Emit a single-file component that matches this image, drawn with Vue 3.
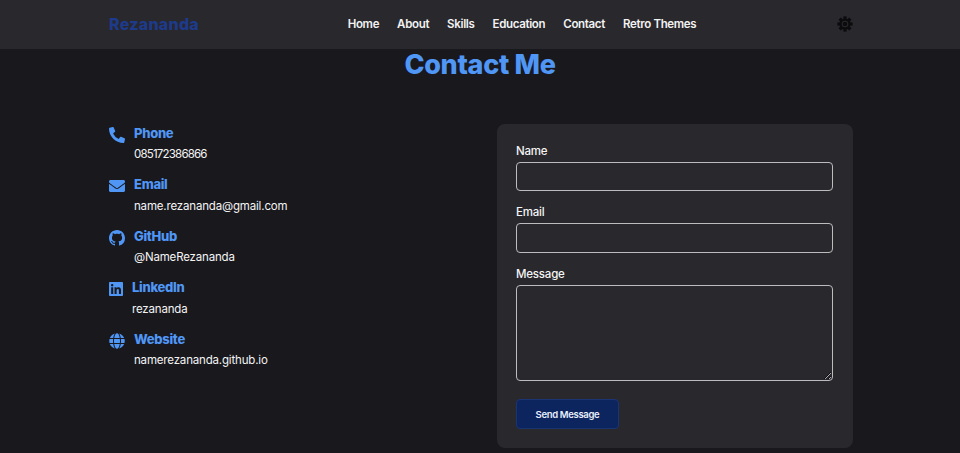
<script setup>
const nav = ['Home', 'About', 'Skills', 'Education', 'Contact', 'Retro Themes']
const teeth = [0, 45, 90, 135, 180, 225, 270, 315]
const contacts = [
  { title: 'Phone', value: '085172386866', digits: true, box: '0 0 512 512', w: 16, d: 'M497.39 361.8l-112-48a24 24 0 0 0-28 6.9l-49.6 60.6A370.66 370.66 0 0 1 130.6 204.11l60.6-49.6a23.94 23.94 0 0 0 6.9-28l-48-112A24.16 24.16 0 0 0 122.6.61l-104 24A24 24 0 0 0 0 48c0 256.5 207.9 464 464 464a24 24 0 0 0 23.4-18.6l24-104a24.29 24.29 0 0 0-14.01-27.6z' },
  { title: 'Email', value: 'name.rezananda@gmail.com', box: '0 0 512 512', w: 16, d: 'M502.3 190.8c3.9-3.1 9.7-.2 9.7 4.7V400c0 26.5-21.5 48-48 48H48c-26.5 0-48-21.5-48-48V195.6c0-5 5.7-7.8 9.7-4.7 22.4 17.4 52.1 39.5 154.1 113.6 21.1 15.4 56.7 47.8 92.2 47.6 35.7.3 72-32.8 92.3-47.6 102-74.1 131.6-96.3 154-113.7zM256 320c23.2.4 56.6-29.2 73.4-41.4 132.7-96.3 142.8-104.7 173.4-128.7 5.8-4.5 9.2-11.5 9.2-18.9v-19c0-26.5-21.5-48-48-48H48C21.5 64 0 85.5 0 112v19c0 7.4 3.4 14.3 9.2 18.9 30.6 23.9 40.7 32.4 173.4 128.7 16.8 12.2 50.2 41.8 73.4 41.4z' },
  { title: 'GitHub', value: '@NameRezananda', box: '0 0 16 16', w: 16, d: 'M8 0C3.58 0 0 3.58 0 8c0 3.54 2.29 6.53 5.47 7.59.4.07.55-.17.55-.38 0-.19-.01-.82-.01-1.49-2.01.37-2.53-.49-2.69-.94-.09-.23-.48-.94-.82-1.13-.28-.15-.68-.52-.01-.53.63-.01 1.08.58 1.23.82.72 1.21 1.87.87 2.33.66.07-.52.28-.87.51-1.07-1.78-.2-3.64-.89-3.64-3.95 0-.87.31-1.59.82-2.15-.08-.2-.36-1.02.08-2.12 0 0 .67-.21 2.2.82.64-.18 1.32-.27 2-.27.68 0 1.36.09 2 .27 1.53-1.04 2.2-.82 2.2-.82.44 1.1.16 1.92.08 2.12.51.56.82 1.27.82 2.15 0 3.07-1.87 3.75-3.65 3.95.29.25.54.73.54 1.48 0 1.07-.01 1.93-.01 2.2 0 .21.15.46.55.38A8.013 8.013 0 0016 8c0-4.42-3.58-8-8-8z' },
  { title: 'LinkedIn', value: 'rezananda', box: '0 0 448 512', w: 14, d: 'M416 32H31.9C14.3 32 0 46.5 0 64.3v383.4C0 465.5 14.3 480 31.9 480H416c17.6 0 32-14.5 32-32.3V64.3c0-17.8-14.4-32.3-32-32.3zM135.4 416H69V202.2h66.5V416zm-33.2-243c-21.3 0-38.5-17.3-38.5-38.5S80.9 96 102.2 96c21.2 0 38.5 17.3 38.5 38.5 0 21.3-17.2 38.5-38.5 38.5zm282.1 243h-66.4V312c0-24.8-.5-56.7-34.5-56.7-34.6 0-39.9 27-39.9 54.9V416h-66.4V202.2h63.7v29.2h.9c8.9-16.8 30.6-34.5 62.9-34.5 67.2 0 79.7 44.3 79.7 101.9V416z' },
  { title: 'Website', value: 'namerezananda.github.io', box: '0 0 496 512', w: 16, d: 'M336.5 160C322 70.7 287.8 8 248 8s-74 62.7-88.5 152h177zM152 256c0 22.2 1.2 43.5 3.3 64h185.3c2.1-20.5 3.3-41.8 3.3-64s-1.2-43.5-3.3-64H155.3c-2.1 20.5-3.3 41.8-3.3 64zm324.7-96c-28.6-67.9-86.5-120.4-158-141.6 24.4 33.8 41.2 84.7 50 141.6h108zM177.2 18.4C105.8 39.6 47.8 92.1 19.3 160h108c8.7-56.9 25.5-107.8 49.9-141.6zM487.4 192H372.7c2.1 21 3.3 42.5 3.3 64s-1.2 43-3.3 64h114.6c5.5-20.5 8.6-41.8 8.6-64s-3.1-43.5-8.5-64zM120 256c0-21.5 1.2-43 3.3-64H8.6C3.2 212.5 0 233.8 0 256s3.2 43.5 8.6 64h114.6c-2-21-3.2-42.5-3.2-64zm39.5 96c14.5 89.3 48.7 152 88.5 152s74-62.7 88.5-152h-177zm159.3 141.6c71.4-21.2 129.4-73.7 158-141.6h-108c-8.8 56.9-25.6 107.8-50 141.6zM19.3 352c28.6 67.9 86.5 120.4 158 141.6-24.4-33.8-41.2-84.7-50-141.6h-108z' }
]
</script>

<template>
  <div class="page">
    <header class="header">
      <div class="brand">Rezananda</div>
      <nav class="nav">
        <a v-for="n in nav" :key="n" class="link">{{ n }}</a>
      </nav>
      <svg class="gear" viewBox="0 0 24 24" width="16" height="16">
        <rect v-for="t in teeth" :key="t" x="9.6" y="0.6" width="4.8" height="5" :transform="`rotate(${t} 12 12)`" />
        <circle cx="12" cy="12" r="8.4" />
        <circle class="gear-ring" cx="12" cy="12" r="4.2" />
      </svg>
    </header>
    <h1 class="title">Contact Me</h1>
    <main class="grid">
      <section class="info">
        <div v-for="c in contacts" :key="c.title" class="row">
          <svg class="icon" :viewBox="c.box" :width="c.w" height="16"><path :d="c.d" /></svg>
          <div>
            <h3 class="label">{{ c.title }}</h3>
            <p class="value" :class="{ digits: c.digits }">{{ c.value }}</p>
          </div>
        </div>
      </section>
      <form class="card" @submit.prevent>
        <label class="field-label" for="f-name">Name</label>
        <input id="f-name" class="control" type="text" />
        <label class="field-label" for="f-email">Email</label>
        <input id="f-email" class="control" type="email" />
        <label class="field-label" for="f-msg">Message</label>
        <textarea id="f-msg" class="control area"></textarea>
        <button class="send" type="submit">Send Message</button>
      </form>
    </main>
  </div>
</template>

<style>
html, body { margin: 0; background: #18181d; overflow: hidden; }
</style>

<style scoped>
.page {
  height: 453px;
  overflow: hidden;
  background: #18181d;
  font-family: Inter, Roboto, sans-serif;
  color: #fff;
}
.header {
  height: 49px;
  box-sizing: border-box;
  padding: 0 107px 2px 109px;
  background: #28282d;
  display: flex;
  align-items: center;
  justify-content: space-between;
}
.brand {
  font-size: 16px;
  font-weight: 800;
  color: #1e3a8a;
  letter-spacing: 0.25px;
}
.nav { display: flex; gap: 18px; margin-left: 8px; }
.link { font-size: 11.5px; font-weight: 600; letter-spacing: -0.33px; color: #f2f2f2; }
.gear { fill: #0c0c0e; }
.gear-ring { fill: none; stroke: #28282d; stroke-width: 1.6; }
.title {
  margin: 1px 0 0;
  height: 30px;
  line-height: 30px;
  text-align: center;
  font-size: 27px;
  font-weight: 800;
  letter-spacing: -0.3px;
  color: #5096f5;
}
.grid {
  margin: 43.75px 107px 0 109px;
  display: grid;
  grid-template-columns: 1fr 356px;
}
.info { display: flex; flex-direction: column; gap: 12px; }
.row { display: flex; gap: 9px; height: 39.5px; }
.icon { fill: #5096f5; margin-top: 3px; flex: none; }
.label {
  margin: 0;
  font-size: 13px;
  line-height: 18px;
  font-weight: 800;
  letter-spacing: -0.3px;
  color: #5096f5;
}
.value {
  margin: 3.25px 0 0;
  font-size: 11.5px;
  line-height: 18px;
  letter-spacing: -0.17px;
  color: #f4f4f4;
}
.digits { letter-spacing: -0.8px; }
.card {
  height: 324px;
  margin-top: 0.25px;
  box-sizing: border-box;
  padding: 19px 20px 19px 19px;
  border-radius: 8px;
  background: #28282d;
  display: flex;
  flex-direction: column;
}
.field-label {
  height: 15px;
  font-size: 11.5px;
  font-weight: 500;
  line-height: 17px;
  letter-spacing: -0.2px;
  color: #f4f4f4;
  margin-bottom: 4px;
}
.control {
  display: block;
  box-sizing: border-box;
  width: 100%;
  height: 29.5px;
  margin: 0 0 13px;
  padding: 4px 8px;
  border: 1px solid #bcbcbe;
  border-radius: 4px;
  background: #28282d;
  color: #fff;
}
.area { height: 96px; margin-bottom: 18.5px; resize: vertical; }
.send {
  width: 103px;
  height: 30px;
  flex: none;
  border: 1px solid #1b3474;
  border-radius: 4px;
  background: #0d255f;
  color: #e8eefc;
  font-family: inherit;
  font-size: 9.5px;
  font-weight: 600;
  letter-spacing: -0.33px;
}
</style>
